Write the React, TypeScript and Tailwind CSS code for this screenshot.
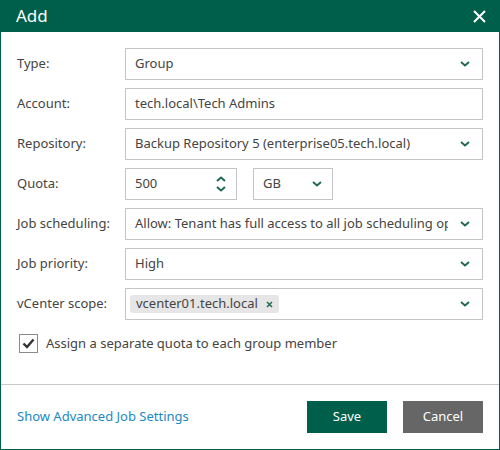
import React, { useState } from 'react';

const font = { fontFamily: '"Segoe UI", "Noto Sans", "Open Sans", sans-serif' };

const Chevron: React.FC<{ up?: boolean }> = ({ up }) => (
  <svg width="10" height="6" viewBox="0 0 10 6" className="text-[#1f6b52]">
    <path
      d={up ? 'M1 5 L5 1.5 L9 5' : 'M1 1 L5 4.5 L9 1'}
      fill="none"
      stroke="currentColor"
      strokeWidth="2"
    />
  </svg>
);

const Select: React.FC<{ value: string }> = ({ value }) => (
  <div className="flex-1 h-8 border border-[#c4c4c4] flex items-center pl-[9px] pr-[12px] min-w-0">
    <span className="flex-1 truncate whitespace-nowrap overflow-hidden text-clip">{value}</span>
    <span className="ml-3 shrink-0">
      <Chevron />
    </span>
  </div>
);

const Row: React.FC<{ label: string; children: React.ReactNode }> = ({ label, children }) => (
  <div className="flex items-center h-8">
    <div className="w-[108px] shrink-0">{label}</div>
    {children}
  </div>
);

export default function App() {
  const [checked, setChecked] = useState(true);

  return (
    <div style={font} className="w-[500px] h-[450px] bg-white text-[13px] text-[#444] flex flex-col border border-t-0 border-[#005f4b]">
      <div className="h-8 bg-[#005f4b] -mx-px flex items-center justify-between pl-4 pr-[14px] text-white">
        <span className="text-[17px]">Add</span>
        <svg width="13" height="13" viewBox="0 0 13 13">
          <path d="M1 1 L12 12 M12 1 L1 12" stroke="white" strokeWidth="2" />
        </svg>
      </div>

      <div className="flex flex-col gap-2 pt-4 pl-4 pr-[16px]">
        <Row label="Type:">
          <Select value="Group" />
        </Row>
        <Row label="Account:">
          <div className="flex-1 h-8 border border-[#c4c4c4] flex items-center pl-[9px]">tech.local\Tech Admins</div>
        </Row>
        <Row label="Repository:">
          <Select value="Backup Repository 5 (enterprise05.tech.local)" />
        </Row>
        <Row label="Quota:">
          <div className="w-[112px] h-8 border border-[#c4c4c4] flex items-center pl-[9px] pr-[10px]">
            <span className="flex-1">500</span>
            <div className="flex flex-col gap-[4px]">
              <Chevron up />
              <Chevron />
            </div>
          </div>
          <div className="w-[80px] ml-[16px] h-8 border border-[#c4c4c4] flex items-center pl-[9px] pr-[10px]">
            <span className="flex-1">GB</span>
            <Chevron />
          </div>
        </Row>
        <Row label="Job scheduling:">
          <Select value="Allow: Tenant has full access to all job scheduling options" />
        </Row>
        <Row label="Job priority:">
          <Select value="High" />
        </Row>
        <Row label="vCenter scope:">
          <div className="flex-1 h-8 border border-[#c4c4c4] flex items-center pl-[4px] pr-[12px]">
            <div className="flex-1">
              <span className="inline-flex items-center h-[18px] bg-[#e6e6e6] rounded-[3px] pl-[6px] pr-[6px] gap-[8px]">
                vcenter01.tech.local
                <svg width="7" height="7" viewBox="0 0 7 7">
                  <path d="M1 1 L6 6 M6 1 L1 6" stroke="#1f6b52" strokeWidth="1.5" />
                </svg>
              </span>
            </div>
            <Chevron />
          </div>
        </Row>

        <label className="flex items-center gap-[8px] mt-[6px] ml-[2px] cursor-pointer">
          <span
            onClick={() => setChecked(!checked)}
            className="w-[19px] h-[19px] border border-[#8a8a8a] bg-white flex items-center justify-center"
          >
            {checked && (
              <svg width="13" height="11" viewBox="0 0 13 11">
                <path d="M1.5 5.5 L5 9 L11.5 1.5" fill="none" stroke="#333" strokeWidth="2.4" />
              </svg>
            )}
          </span>
          <span>Assign a separate quota to each group member</span>
        </label>
      </div>

      <div className="mt-auto border-t border-[#c8c8c8] h-[65px] flex items-center pl-4 pr-[16px]">
        <a className="flex-1 text-[#1b8ac2] cursor-pointer">Show Advanced Job Settings</a>
        <button className="w-[80px] h-8 bg-[#005f4b] text-white">Save</button>
        <button className="w-[80px] h-8 bg-[#666] text-white ml-[16px]">Cancel</button>
      </div>
    </div>
  );
}
